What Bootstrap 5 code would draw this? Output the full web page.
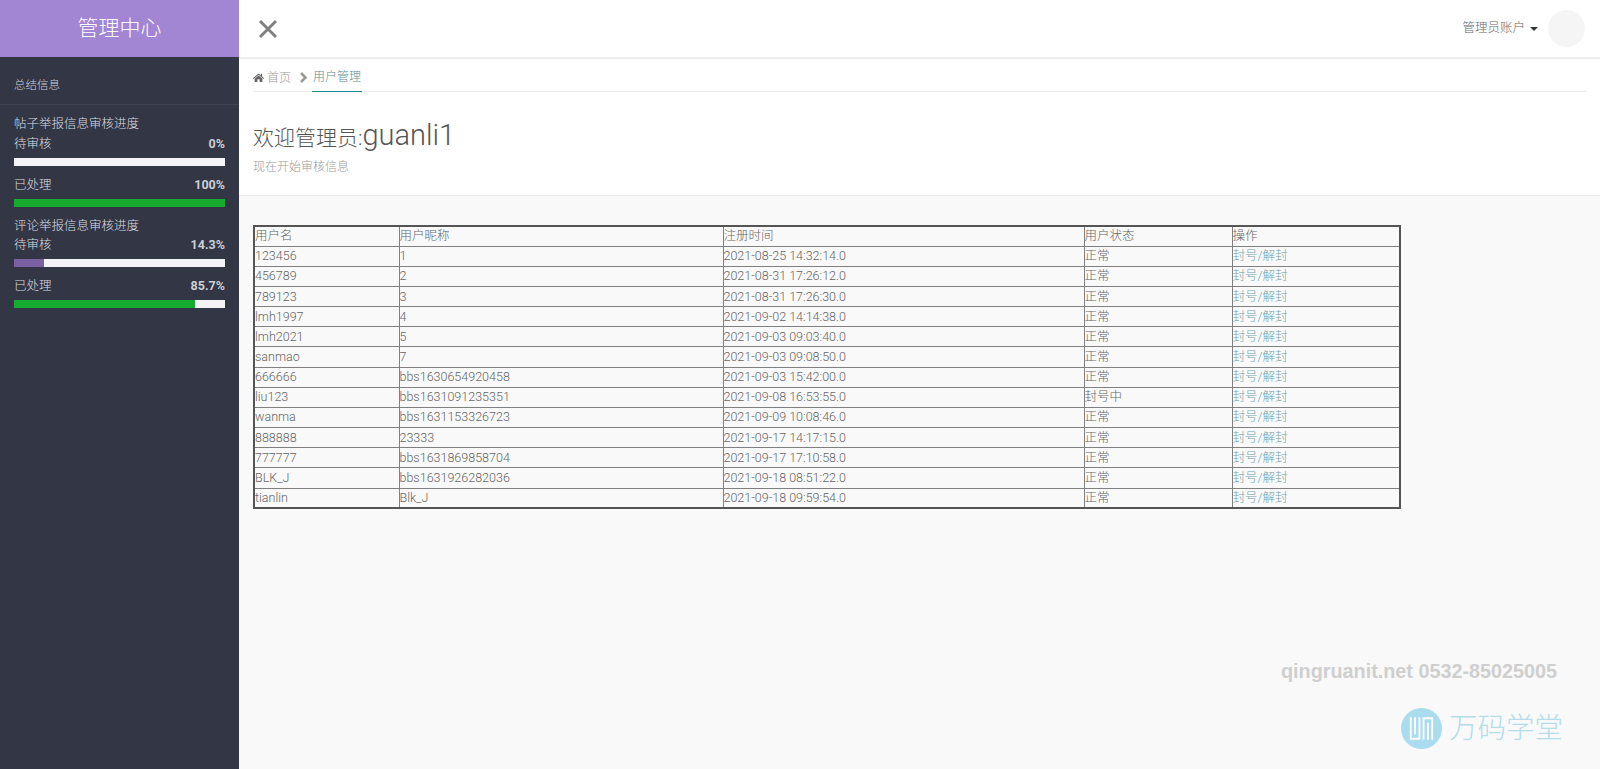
<!DOCTYPE html>
<html lang="zh">
<head>
<meta charset="utf-8">
<title>管理中心</title>
<link href="https://cdn.jsdelivr.net/npm/bootstrap@5.3.0/dist/css/bootstrap.min.css" rel="stylesheet">
<style>
html,body{height:100%}
body{font-family:Roboto,"Noto Sans CJK SC",sans-serif;font-weight:300;font-size:12.5px;color:#666;background:#f9f9f9;overflow:hidden}
.shell{height:769px}
.side{width:239px;background:#333645;color:#dcdde2;flex:none}
.brand{height:57px;background:#a285d3;color:#fff;font-size:21px;font-weight:300}
.side-title{height:48px;padding:11px 0 0 14px;border-bottom:1px solid #3f4252;font-size:11.5px;color:#cfd0d6}
.side-body{padding:8px 14px 0}
.group-label{height:20px;padding-top:1px;line-height:20px;font-size:12.5px}
.bar-track + .group-label{height:19px}
.bar-head{display:flex;justify-content:space-between;height:20px;padding-top:1px;line-height:20px;font-size:12.5px}
.bar-head b{font-size:12.5px;font-weight:700;color:#ccced4}
.bar-track{height:8px;background:#f4f4f6;margin:5px 0 8px;display:flex}
.bar-fill{height:100%}
.fill-green{background:#17ab2f}
.fill-purple{background:#7a5fa3}
.topbar{height:59px;background:#fff;border-bottom:2px solid #eee;padding:0 15px 0 18px}
.closer{width:22px;height:22px;color:#808080}
.acct{font-size:12.5px;color:#666;font-weight:300}
.caret-down{width:0;height:0;border-left:4px solid transparent;border-right:4px solid transparent;border-top:4px solid #333;margin:0 10px 0 5px}
.avatar{width:37px;height:37px;border-radius:50%;background:#f5f5f5}
.head-panel{background:#fff;height:137px;border-bottom:1px solid #e9e9e9;padding:0 14px}
.crumbs{height:33px;border-bottom:1px solid #e9e9e9;font-size:12px;color:#999;padding-top:5px}
.crumb-on{height:33px;line-height:37px;color:#5f8d8d;border-bottom:1px solid #1c8a8e;margin:-5px 0 -1px -1px;padding:0 1px}
.crumb-home{width:11px;height:11px;margin-right:3px;fill:#666}
.crumb-sep{width:9px;height:11px;margin:0 5px 0 8px;stroke:#999;stroke-width:2.500;fill:none}
.page-title{font-size:21px;font-weight:300;color:#555;margin:27px 0 0;line-height:32px;display:flex;align-items:baseline}
.page-title span{font-size:29px}
.page-sub{font-size:12px;color:#999;margin-top:4px}
.main-area{padding:29px 14px 0;position:relative;flex:1}
.users{border-collapse:collapse;width:1146px;table-layout:fixed;border:2px solid #555}
.users td{border:1px solid #808080;padding:0;height:20.17px;line-height:18px;font-size:12.5px;white-space:nowrap;overflow:hidden}
.users a{color:#6fa3ad;text-decoration:none}
.mark-tel{position:absolute;right:43px;top:461px;font-family:"Liberation Sans",sans-serif;font-weight:700;font-size:19.800px;color:#cfcfcf}
.mark-logo{position:absolute;right:37px;top:512px;color:#b3dde9;font-size:28.500px;font-weight:300;line-height:41px;gap:7px}
.mark-logo svg{width:41px;height:41px}
</style>
</head>
<body>
<div class="shell d-flex">
  <aside class="side d-flex flex-column">
    <div class="brand d-flex align-items-center justify-content-center">管理中心</div>
    <div class="side-title d-flex align-items-center">总结信息</div>
    <div class="side-body">
      <div class="group-label">帖子举报信息审核进度</div>
      <div class="bar-head"><span>待审核</span><b>0%</b></div>
      <div class="bar-track"></div>
      <div class="bar-head"><span>已处理</span><b>100%</b></div>
      <div class="bar-track"><div class="bar-fill fill-green" style="width:100%"></div></div>
      <div class="group-label">评论举报信息审核进度</div>
      <div class="bar-head"><span>待审核</span><b>14.3%</b></div>
      <div class="bar-track"><div class="bar-fill fill-purple" style="width:14.3%"></div></div>
      <div class="bar-head"><span>已处理</span><b>85.7%</b></div>
      <div class="bar-track"><div class="bar-fill fill-green" style="width:85.7%"></div></div>
    </div>
  </aside>
  <div class="flex-grow-1 d-flex flex-column">
    <header class="topbar d-flex align-items-center justify-content-between">
      <svg class="closer" viewBox="0 0 22 22"><path d="M3 3L19 19M19 3L3 19" stroke="currentColor" stroke-width="3" fill="none"/></svg>
      <div class="d-flex align-items-center">
        <span class="acct">管理员账户</span><span class="caret-down"></span><span class="avatar"></span>
      </div>
    </header>
    <section class="head-panel">
      <div class="crumbs d-flex align-items-center">
        <svg class="crumb-home" viewBox="0 0 12 12"><path d="M6 1.500L0 6.800l.7.8L6 3l5.300 4.600.7-.8-2-1.800V2H8.500v1.700zM1.800 7.400V11h3V8h2.400v3h3V7.400L6 3.800z"/></svg>
        <span>首页</span>
        <svg class="crumb-sep" viewBox="0 0 9 11"><path d="M2 1l4.500 4.500L2 10"/></svg>
        <span class="crumb-on">用户管理</span>
      </div>
      <h1 class="page-title">欢迎管理员:<span>guanli1</span></h1>
      <div class="page-sub">现在开始审核信息</div>
    </section>
    <main class="main-area">
      <table class="users">
        <colgroup><col style="width:145px"><col style="width:324px"><col style="width:361px"><col style="width:148px"><col style="width:168px"></colgroup>
        <tbody>
        <tr><td>用户名</td><td>用户昵称</td><td>注册时间</td><td>用户状态</td><td>操作</td></tr>
        <tr><td>123456</td><td>1</td><td>2021-08-25 14:32:14.0</td><td>正常</td><td><a href="#">封号/解封</a></td></tr>
        <tr><td>456789</td><td>2</td><td>2021-08-31 17:26:12.0</td><td>正常</td><td><a href="#">封号/解封</a></td></tr>
        <tr><td>789123</td><td>3</td><td>2021-08-31 17:26:30.0</td><td>正常</td><td><a href="#">封号/解封</a></td></tr>
        <tr><td>lmh1997</td><td>4</td><td>2021-09-02 14:14:38.0</td><td>正常</td><td><a href="#">封号/解封</a></td></tr>
        <tr><td>lmh2021</td><td>5</td><td>2021-09-03 09:03:40.0</td><td>正常</td><td><a href="#">封号/解封</a></td></tr>
        <tr><td>sanmao</td><td>7</td><td>2021-09-03 09:08:50.0</td><td>正常</td><td><a href="#">封号/解封</a></td></tr>
        <tr><td>666666</td><td>bbs1630654920458</td><td>2021-09-03 15:42:00.0</td><td>正常</td><td><a href="#">封号/解封</a></td></tr>
        <tr><td>liu123</td><td>bbs1631091235351</td><td>2021-09-08 16:53:55.0</td><td>封号中</td><td><a href="#">封号/解封</a></td></tr>
        <tr><td>wanma</td><td>bbs1631153326723</td><td>2021-09-09 10:08:46.0</td><td>正常</td><td><a href="#">封号/解封</a></td></tr>
        <tr><td>888888</td><td>23333</td><td>2021-09-17 14:17:15.0</td><td>正常</td><td><a href="#">封号/解封</a></td></tr>
        <tr><td>777777</td><td>bbs1631869858704</td><td>2021-09-17 17:10:58.0</td><td>正常</td><td><a href="#">封号/解封</a></td></tr>
        <tr><td>BLK_J</td><td>bbs1631926282036</td><td>2021-09-18 08:51:22.0</td><td>正常</td><td><a href="#">封号/解封</a></td></tr>
        <tr><td>tianlin</td><td>Blk_J</td><td>2021-09-18 09:59:54.0</td><td>正常</td><td><a href="#">封号/解封</a></td></tr>
        </tbody>
      </table>
      <div class="mark-tel">qingruanit.net 0532-85025005</div>
      <div class="mark-logo d-flex align-items-center">
        <svg viewBox="0 0 40 40"><circle cx="20" cy="20" r="20" fill="#a9dcee"/><path d="M9.500 9v21h8.500V9M13.750 9v16.500M22 31V10h8.500v21M26.250 31V14.500" stroke="#fff" stroke-width="1.800" fill="none"/></svg>
        <span>万码学堂</span>
      </div>
    </main>
  </div>
</div>
<script src="https://cdn.jsdelivr.net/npm/bootstrap@5.3.0/dist/js/bootstrap.bundle.min.js"></script>
</body>
</html>
